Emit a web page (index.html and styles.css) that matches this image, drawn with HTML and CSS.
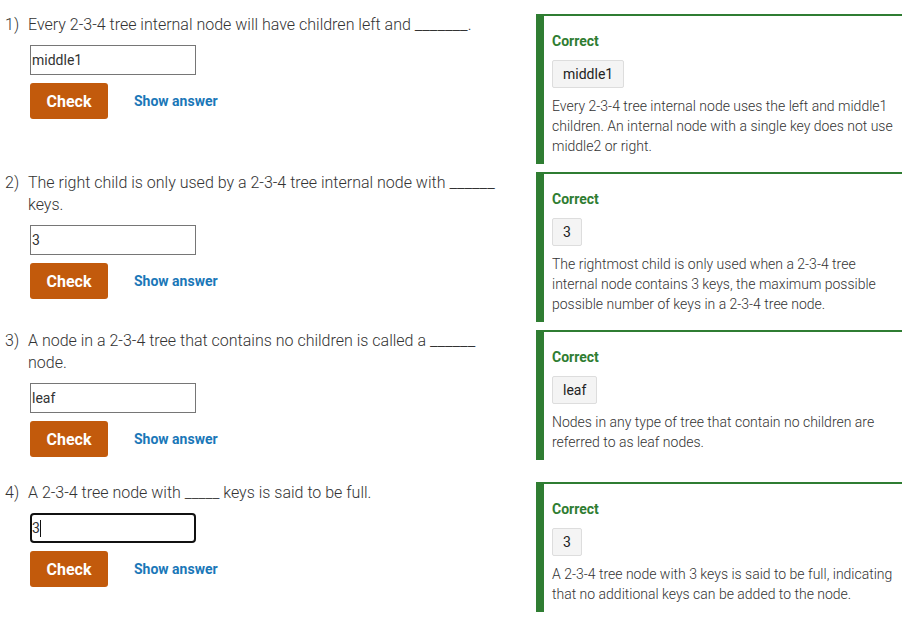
FILE: index.html
```html
<!DOCTYPE html>
<html lang="en">
<head>
<meta charset="utf-8">
<title>2-3-4 tree questions</title>
<link rel="stylesheet" href="styles.css">
</head>
<body>
<div class="page">
  <div class="row">
    <div class="question">
      <div class="prompt"><span class="num">1)</span><span class="text">Every 2-3-4 tree internal node will have children left and <span class="blank">_______</span>.</span></div>
      <div class="answer">
        <input class="field" type="text" value="middle1">
        <div class="actions"><button class="check">Check</button><button class="show">Show answer</button></div>
      </div>
    </div>
    <div class="panel">
      <div class="status">Correct</div>
      <div class="chip">middle1</div>
      <p class="explain">Every 2-3-4 tree internal node uses the left and middle1 children. An internal node with a single key does not use middle2 or right.</p>
    </div>
  </div>

  <div class="row">
    <div class="question">
      <div class="prompt"><span class="num">2)</span><span class="text">The right child is only used by a 2-3-4 tree internal node with <span class="blank">______</span> keys.</span></div>
      <div class="answer">
        <input class="field" type="text" value="3">
        <div class="actions"><button class="check">Check</button><button class="show">Show answer</button></div>
      </div>
    </div>
    <div class="panel">
      <div class="status">Correct</div>
      <div class="chip">3</div>
      <p class="explain">The rightmost child is only used when a 2-3-4 tree internal node contains 3 keys, the maximum possible possible number of keys in a 2-3-4 tree node.</p>
    </div>
  </div>

  <div class="row">
    <div class="question">
      <div class="prompt"><span class="num">3)</span><span class="text">A node in a 2-3-4 tree that contains no children is called a <span class="blank">______</span> node.</span></div>
      <div class="answer">
        <input class="field" type="text" value="leaf">
        <div class="actions"><button class="check">Check</button><button class="show">Show answer</button></div>
      </div>
    </div>
    <div class="panel">
      <div class="status">Correct</div>
      <div class="chip">leaf</div>
      <p class="explain">Nodes in any type of tree that contain no children are referred to as leaf nodes.</p>
    </div>
  </div>

  <div class="row">
    <div class="question">
      <div class="prompt"><span class="num">4)</span><span class="text">A 2-3-4 tree node with _____ keys is said to be full.</span></div>
      <div class="answer">
        <span class="field-wrap"><input class="field focused" type="text" value="3"><span class="caret"></span></span>
        <div class="actions"><button class="check">Check</button><button class="show">Show answer</button></div>
      </div>
    </div>
    <div class="panel">
      <div class="status">Correct</div>
      <div class="chip">3</div>
      <p class="explain">A 2-3-4 tree node with 3 keys is said to be full, indicating that no additional keys can be added to the node.</p>
    </div>
  </div>
</div>
</body>
</html>
```
FILE: styles.css
```css
* { box-sizing: border-box; }

html, body {
  margin: 0;
  padding: 0;
  background: #ffffff;
}

body {
  font-family: Roboto, "Liberation Sans", Arial, sans-serif;
  font-weight: 300;
  color: #333333;
}

.page {
  padding: 14px 10px 0 5px;
}

.row {
  display: flex;
  align-items: flex-start;
  margin-bottom: 8px;
}

.question {
  flex: 1;
  min-width: 0;
  padding-right: 26px;
  padding-bottom: 17px;
}

.prompt {
  display: grid;
  grid-template-columns: 23px 1fr;
  font-size: 16px;
  line-height: 22px;
  color: #333333;
}

.blank {
  font-size: 17.5px;
  line-height: 14px;
}

.answer {
  margin-left: 25px;
  padding-top: 9px;
}

.field-wrap {
  position: relative;
  display: block;
  width: 166px;
  height: 30px;
}

.field {
  display: block;
  width: 166px;
  height: 30px;
  margin: 0;
  padding: 0 1px;
  border: 1px solid #767676;
  border-radius: 0;
  font-family: Roboto, "Liberation Sans", Arial, sans-serif;
  font-weight: 400;
  font-size: 14px;
  color: #333333;
  background: #ffffff;
  outline: none;
}

.field.focused {
  border: 2px solid #111111;
  border-radius: 4px;
  padding: 0;
  caret-color: transparent;
}

.caret {
  position: absolute;
  left: 10px;
  top: 7px;
  width: 1px;
  height: 17px;
  background: #111111;
}

.actions {
  display: flex;
  align-items: center;
  margin-top: 8px;
}

.check {
  width: 78px;
  height: 36px;
  margin: 0;
  padding: 0;
  border: none;
  border-radius: 3px;
  background: #c25a0c;
  color: #ffffff;
  font-family: Roboto, "Liberation Sans", Arial, sans-serif;
  font-size: 16px;
  font-weight: 700;
}

.show {
  margin: 0 0 0 26px;
  padding: 0;
  border: none;
  background: none;
  color: #1a77b8;
  font-family: Roboto, "Liberation Sans", Arial, sans-serif;
  font-size: 14px;
  font-weight: 700;
}

.panel {
  flex: none;
  width: 366px;
  border-top: 2px solid #2f7d32;
  border-left: 8px solid #2f7d32;
  padding: 15px 4px 8px 8px;
}

.status {
  font-size: 14px;
  line-height: 20px;
  font-weight: 700;
  color: #2f7d32;
  margin-bottom: 9px;
}

.chip {
  display: block;
  width: fit-content;
  padding: 5px 10px;
  border: 1px solid #dddddd;
  border-radius: 2px;
  background: #f4f4f4;
  color: #222222;
  font-size: 14px;
  font-weight: 400;
  line-height: 16px;
}

.explain {
  margin: 8px 0 0 0;
  font-size: 14px;
  line-height: 20px;
  color: #333333;
}
```
